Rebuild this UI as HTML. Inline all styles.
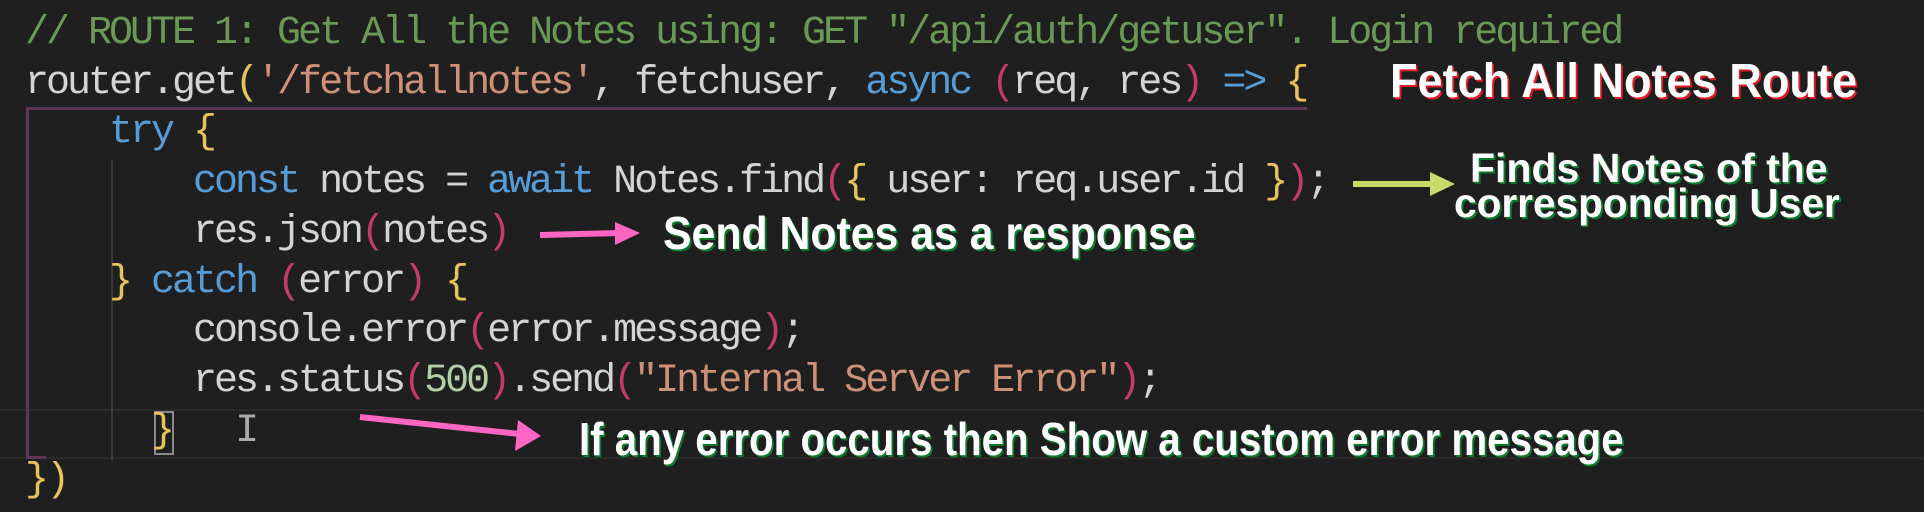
<!DOCTYPE html>
<html><head><meta charset="utf-8"><style>
html,body{margin:0;padding:0}
body{width:1924px;height:520px;background:#fff;position:relative;overflow:hidden}
#bg{position:absolute;left:0;top:0;width:1924px;height:512px;background:#1f1f1f}
.code{position:absolute;left:25px;top:9px;font-family:"Liberation Mono",monospace;font-size:40px;letter-spacing:-3px;line-height:49.7px;color:#d4d4d4;white-space:pre}
.c{color:#6a9955}.s{color:#ce9178}.k{color:#569cd6}.y{color:#e8c35a}.p{color:#c23a6e}.n{color:#b5cea8}.v{color:#9cdcfe}
.ann{position:absolute;font-family:"Liberation Sans Narrow","Liberation Sans",sans-serif;font-weight:bold;color:#fff;white-space:nowrap;transform-origin:0 50%;line-height:1}
.g{text-shadow:2px 2px 0 #0b7a2c,1px 1px 0 #0b7a2c}
.r{text-shadow:2px 2px 0 #e21b23,1px 1px 0 #e21b23}
</style></head><body>
<div id="bg"></div>
<div style="position:absolute;left:0;top:409px;width:1924px;height:50px;border-top:2px solid #2a2a2a;border-bottom:2px solid #2a2a2a;box-sizing:border-box"></div>
<div style="position:absolute;left:26px;top:107px;width:1281px;height:352px;border-left:3px solid #5e3655;border-top:3px solid #5e3655;box-sizing:border-box"></div>
<div style="position:absolute;left:26px;top:456px;width:20px;height:3px;background:#5e3655"></div>
<div style="position:absolute;left:111px;top:160px;width:2px;height:300px;background:#3a3a3a"></div>
<div style="position:absolute;left:154px;top:411px;width:20px;height:44px;border:2px solid #8a8a8a;box-sizing:border-box"></div>
<div class="code"><span class="c">// ROUTE 1: Get All the Notes using: GET "/api/auth/getuser". Login required</span>
router.get<span class="y">(</span><span class="s">'/fetchallnotes'</span>, fetchuser, <span class="k">async</span> <span class="p">(</span>req, res<span class="p">)</span> <span class="k">=&gt;</span> <span class="y">{</span>
    <span class="k">try</span> <span class="y">{</span>
        <span class="k">const</span> notes = <span class="k">await</span> Notes.find<span class="p">(</span><span class="y">{</span> user: req.user.id <span class="y">}</span><span class="p">)</span>;
        res.json<span class="p">(</span>notes<span class="p">)</span>
    <span class="y">}</span> <span class="k">catch</span> <span class="p">(</span>error<span class="p">)</span> <span class="y">{</span>
        console.error<span class="p">(</span>error.message<span class="p">)</span>;
        res.status<span class="p">(</span><span class="n">500</span><span class="p">)</span>.send<span class="p">(</span><span class="s">"Internal Server Error"</span><span class="p">)</span>;
      <span class="y">}</span>   <span style="color:#aaa">I</span>
<span class="y">})</span></div>
<svg style="position:absolute;left:0;top:0" width="1924" height="520">
<line x1="540" y1="235" x2="620" y2="233" stroke="#ff66c4" stroke-width="6"/>
<polygon points="615,222 640,233 615,245" fill="#ff66c4"/>
<line x1="1353" y1="184" x2="1434" y2="184" stroke="#c9da66" stroke-width="6"/>
<polygon points="1430,172 1455,184 1430,196" fill="#c9da66"/>
<line x1="360" y1="417" x2="520" y2="434" stroke="#ff66c4" stroke-width="6"/>
<polygon points="518,420 541,436 515,451" fill="#ff66c4"/>
</svg>
<div class="ann r" style="left:1390px;top:58px;font-size:48px;transform:scaleX(0.94)">Fetch All Notes Route</div>
<div class="ann g" style="left:1470px;top:148px;font-size:41px;transform:scaleX(1.0)">Finds Notes of the</div>
<div class="ann g" style="left:1454px;top:183px;font-size:41px;transform:scaleX(0.99)">corresponding User</div>
<div class="ann g" style="left:663px;top:210px;font-size:46px;transform:scaleX(0.93)">Send Notes as a response</div>
<div class="ann g" style="left:579px;top:416px;font-size:46px;transform:scaleX(0.875)">If any error occurs then Show a custom error message</div>
</body></html>
